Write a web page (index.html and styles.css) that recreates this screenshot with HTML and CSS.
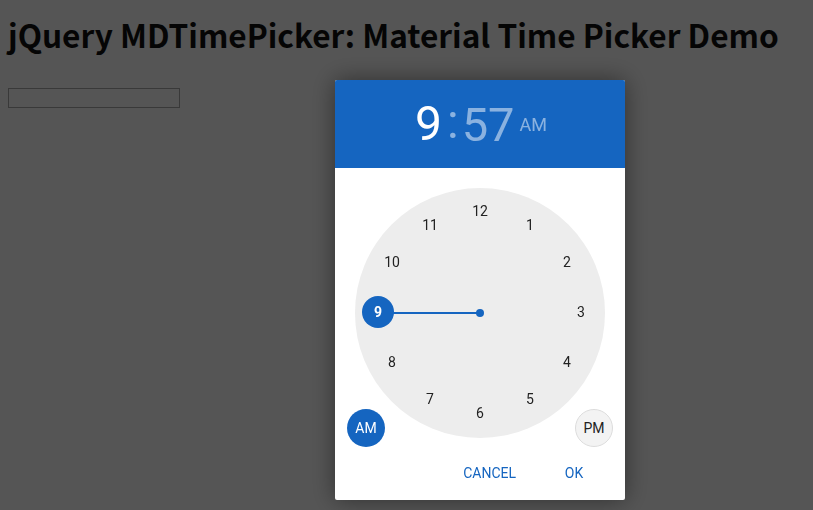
FILE: index.html
```html
<!DOCTYPE html>
<html>
<head>
<meta charset="utf-8">
<link rel="stylesheet" href="styles.css">
</head>
<body>
<h1 class="title">jQuery MDTimePicker: Material Time Picker Demo</h1>
<input class="field" type="text">
<div class="overlay"></div>
<div class="picker">
  <div class="head">
    <span class="hour">9</span><span class="sep">:</span><span class="min">57</span><span class="ampm">AM</span>
  </div>
  <div class="body">
    <div class="clock">
      <div class="hand"></div>
      <div class="dot"></div>
      <span class="num" style="left:125px;top:23px">12</span>
      <span class="num" style="left:175px;top:37px">1</span>
      <span class="num" style="left:212px;top:74px">2</span>
      <span class="num" style="left:226px;top:124px">3</span>
      <span class="num" style="left:212px;top:174px">4</span>
      <span class="num" style="left:175px;top:211px">5</span>
      <span class="num" style="left:125px;top:225px">6</span>
      <span class="num" style="left:75px;top:211px">7</span>
      <span class="num" style="left:37px;top:174px">8</span>
      <span class="num sel" style="left:23px;top:124px">9</span>
      <span class="num" style="left:37px;top:74px">10</span>
      <span class="num" style="left:75px;top:37px">11</span>
    </div>
    <button class="mer am">AM</button>
    <button class="mer pm">PM</button>
  </div>
  <div class="foot">
    <button class="act cancel">CANCEL</button>
    <button class="act ok">OK</button>
  </div>
</div>
</body>
</html>
```

FILE: styles.css
```css
html, body {
  margin: 0;
  padding: 0;
}
body {
  background: #ffffff;
  padding: 8px;
  font-family: "Noto Sans CJK KR", "Open Sans", sans-serif;
}
.title {
  margin: 4px 0 32px 0;
  font-size: 31.6px;
  font-weight: 700;
  line-height: 44px;
  color: #111;
  white-space: nowrap;
}
.field {
  display: block;
  margin: 0;
  width: 172px;
  height: 20px;
  box-sizing: border-box;
  border: 1px solid #aaa;
  background: #fff;
}
.overlay {
  position: fixed;
  inset: 0;
  background: rgba(0, 0, 0, 0.667);
}
.picker {
  position: fixed;
  left: 335px;
  top: 80px;
  width: 290px;
  height: 420px;
  background: #fff;
  border-radius: 2px;
  box-shadow: 0 0 24px rgba(0, 0, 0, 0.45);
  display: flex;
  flex-direction: column;
  font-family: Roboto, "Liberation Sans", sans-serif;
  overflow: hidden;
}
.head {
  height: 88px;
  background: #1565c0;
  display: flex;
  align-items: center;
  justify-content: center;
  color: rgba(255, 255, 255, 0.5);
  padding-left: 2px;
}
.hour {
  color: #fff;
  font-size: 48px;
  line-height: 1;
}
.sep {
  font-size: 48px;
  line-height: 1;
  margin: 0 3px 0 5px;
  position: relative;
  top: -2px;
}
.min {
  font-size: 47px;
  line-height: 1;
}
.ampm {
  font-size: 18px;
  margin-left: 5px;
  position: relative;
  top: 0px;
}
.body {
  position: relative;
  height: 270px;
  padding-top: 20px;
  box-sizing: border-box;
  display: flex;
  justify-content: center;
}
.clock {
  position: relative;
  width: 250px;
  height: 250px;
  border-radius: 50%;
  background: #ededed;
}
.num {
  position: absolute;
  width: 32px;
  height: 32px;
  margin: -16px 0 0 -16px;
  display: flex;
  align-items: center;
  justify-content: center;
  font-size: 14px;
  color: #222;
  border-radius: 50%;
}
.num.sel {
  background: #1565c0;
  color: #fff;
  font-weight: 700;
}
.hand {
  position: absolute;
  left: 23px;
  top: 124px;
  width: 102px;
  height: 2px;
  background: #1565c0;
}
.dot {
  position: absolute;
  left: 121px;
  top: 121px;
  width: 8px;
  height: 8px;
  border-radius: 50%;
  background: #1565c0;
}
.mer {
  position: absolute;
  top: 241px;
  width: 38px;
  height: 38px;
  border-radius: 50%;
  font-family: Roboto, "Liberation Sans", sans-serif;
  font-size: 14px;
  padding: 0;
  cursor: pointer;
}
.am {
  left: 12px;
  background: #1565c0;
  color: #fff;
  border: none;
}
.pm {
  right: 12px;
  background: #f3f3f3;
  color: #222;
  border: 1px solid #dcdcdc;
}
.foot {
  display: flex;
  justify-content: flex-end;
  align-items: center;
  gap: 10px;
  padding: 0 19px 0 0;
  height: 36px;
  margin-top: 17px;
}
.act {
  background: none;
  border: none;
  color: #1565c0;
  font-family: Roboto, "Liberation Sans", sans-serif;
  font-size: 14px;
  min-width: 64px;
  padding: 0 16px;
  height: 36px;
}
```
